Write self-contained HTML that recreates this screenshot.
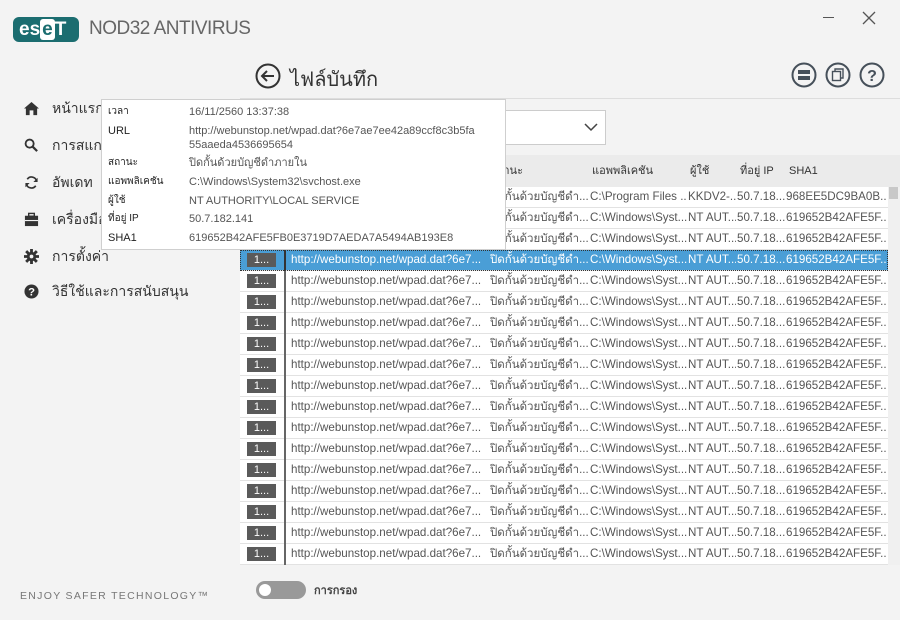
<!DOCTYPE html>
<html><head><meta charset="utf-8">
<style>
*{margin:0;padding:0;box-sizing:border-box}
body{width:900px;height:620px;overflow:hidden;background:#f3f3f3;font-family:"Liberation Sans","Noto Sans CJK SC",sans-serif;position:relative;color:#333}
.abs{position:absolute}
.nav{position:absolute;left:24px;font-size:14px;color:#333;display:flex;align-items:center;height:20px;line-height:20px}
.nav svg{width:15px;height:15px;margin-right:13px}
.row{position:absolute;left:240px;width:648px;height:21px;background:#fff;border-bottom:1px solid #e2e2e2;font-size:11.6px;color:#555;white-space:nowrap}
.row span{position:absolute;top:0;height:20px;line-height:20px;overflow:hidden}
.th{font-size:11.5px}
.btn{position:absolute;left:7px;top:3px;width:29px;height:14px;background:#5a5a5a;color:#fff;font-size:11px;text-align:center;line-height:14px}
.sep{position:absolute;left:44px;top:0;width:2px;height:21px;background:#666}
.sel{background:#4a9ed6;color:#fff;outline:1px dotted #333;outline-offset:-1px}
.tt{position:absolute;left:101px;top:99px;width:405px;height:151px;background:#fff;border:1px solid #cfcfcf;font-size:11px;color:#555}
.tt div{position:absolute;line-height:14px;height:14px}
.tt .k{left:6px;color:#222}
.tt .v{left:87px}
.tt .t{font-size:10px}
</style></head><body>
<div class="abs" style="left:13px;top:17px;width:66px;height:25px;background:#1b6d70;border-radius:6px"></div>
<div class="abs" style="left:19px;top:19px;height:21px;font:bold 19px 'Liberation Sans',sans-serif;color:#fff;line-height:21px">es<span style="background:#fff;color:#1b6d70;border-radius:3px;padding:0 2px">e</span>T</div>
<div class="abs" style="left:89px;top:18px;font-size:19px;color:#666;letter-spacing:-0.5px">NOD32 ANTIVIRUS</div>
<div class="abs" style="left:823px;top:17px;width:11px;height:1px;background:#555"></div>
<svg class="abs" style="left:862px;top:11px" width="14" height="14"><path d="M1 1L13 13M13 1L1 13" stroke="#555" stroke-width="1.3"/></svg>
<svg class="abs" style="left:791px;top:62px" width="26" height="26"><circle cx="13" cy="13" r="11.5" fill="none" stroke="#46505a" stroke-width="2"/><rect x="7" y="8" width="12" height="4" fill="#46505a"/><rect x="7" y="14" width="12" height="4" fill="#46505a"/></svg>
<svg class="abs" style="left:825px;top:62px" width="26" height="26"><circle cx="13" cy="13" r="11.5" fill="none" stroke="#46505a" stroke-width="2"/><rect x="7.5" y="9.5" width="8" height="9" fill="none" stroke="#46505a" stroke-width="1.4"/><path d="M10 9.5V7h8v9h-2.5" fill="none" stroke="#46505a" stroke-width="1.4"/></svg>
<svg class="abs" style="left:859px;top:62px" width="26" height="26"><circle cx="13" cy="13" r="11.5" fill="none" stroke="#46505a" stroke-width="2"/><text x="13" y="19" text-anchor="middle" font-family="Liberation Sans" font-weight="bold" font-size="16" fill="#46505a">?</text></svg>
<svg class="abs" style="left:255px;top:63px" width="26" height="26"><circle cx="13" cy="13" r="11.5" fill="none" stroke="#333" stroke-width="2"/><path d="M19 13H8M12 8l-5 5 5 5" fill="none" stroke="#333" stroke-width="2"/></svg>
<div class="abs" style="left:290px;top:63px;font-size:20px;color:#333">ไฟล์บันทึก</div>
<div class="abs" style="left:240px;top:98px;width:660px;height:1px;background:#ddd"></div>
<div class="nav" style="top:98px"><svg viewBox="0 0 16 16"><path d="M8 1L0 8h2v7h4v-5h4v5h4V8h2z" fill="#333"/></svg>หน้าแรก</div>
<div class="nav" style="top:135px"><svg viewBox="0 0 16 16"><circle cx="6" cy="6" r="4.3" fill="none" stroke="#333" stroke-width="2"/><path d="M9 9l5 5" stroke="#333" stroke-width="2.4"/></svg>การสแกน</div>
<div class="nav" style="top:172px"><svg viewBox="0 0 16 16"><path d="M13.5 7A5.5 5.5 0 0 0 3.5 4.5M2.5 9A5.5 5.5 0 0 0 12.5 11.5" fill="none" stroke="#333" stroke-width="1.8"/><path d="M14.5 3v4.5H10zM1.5 13V8.5H6z" fill="#333"/></svg>อัพเดท</div>
<div class="nav" style="top:209px"><svg viewBox="0 0 16 16"><rect x="1" y="4" width="14" height="11" fill="#333"/><rect x="5" y="1.5" width="6" height="3" fill="none" stroke="#333" stroke-width="1.5"/><rect x="1" y="8.5" width="14" height="1.2" fill="#f3f3f3"/></svg>เครื่องมือ</div>
<div class="nav" style="top:246px"><svg viewBox="0 0 16 16"><circle cx="8" cy="8" r="5" fill="#333"/><path d="M8 0v16M0 8h16M2.3 2.3l11.4 11.4M13.7 2.3L2.3 13.7" stroke="#333" stroke-width="3"/><circle cx="8" cy="8" r="2" fill="#f3f3f3"/></svg>การตั้งค่า</div>
<div class="nav" style="top:281px"><svg viewBox="0 0 16 16"><circle cx="8" cy="8" r="7.5" fill="#333"/><text x="8" y="12.5" text-anchor="middle" font-family="Liberation Sans" font-weight="bold" font-size="12" fill="#fff">?</text></svg>วิธีใช้และการสนับสนุน</div>
<div class="abs" style="left:20px;top:590px;font-size:10.5px;letter-spacing:1.3px;color:#777">ENJOY SAFER TECHNOLOGY™</div>
<div class="abs" style="left:440px;top:110px;width:166px;height:35px;background:#fff;border:1px solid #ccc"></div>
<svg class="abs" style="left:584px;top:122px" width="14" height="10"><path d="M1 2l6 6 6-6" fill="none" stroke="#444" stroke-width="1.5"/></svg>
<div class="abs" style="left:240px;top:155px;width:660px;height:32px;background:#ebebeb;font-size:11px;color:#333;line-height:32px">
<span class="abs" style="left:250px;top:0">สถานะ</span><span class="abs" style="left:352px;top:0">แอพพลิเคชัน</span><span class="abs" style="left:450px;top:0">ผู้ใช้</span><span class="abs" style="left:500px;top:0">ที่อยู่ IP</span><span class="abs" style="left:549px;top:0">SHA1</span></div>
<div class="abs" style="left:888px;top:187px;width:12px;height:378px;background:#f0f0f0"></div>
<div class="abs" style="left:889px;top:187px;width:9px;height:12px;background:#c8c8c8"></div>
<div id="rows"></div>
<script>
var h='';for(var i=0;i<18;i++){var t=187+i*21;var f=i==0;var s=i==3;
h+='<div class="row'+(s?' sel':'')+'" style="top:'+t+'px"><div class="btn">1...</div><div class="sep"'+(s?' style="background:#333"':'')+'></div><span style="left:51px;width:198px">http://webunstop.net/wpad.dat?6e7...</span><span class="th" style="left:250px;width:98px">ปิดกั้นด้วยบัญชีดำ...</span><span style="left:350px;width:97px">'+(f?'C:\\Program Files ...':'C:\\Windows\\Syst...')+'</span><span style="left:448px;width:48px">'+(f?'KKDV2-...':'NT AUT...')+'</span><span style="left:497px;width:48px">50.7.18...</span><span style="left:546px;width:100px">'+(f?'968EE5DC9BA0B...':'619652B42AFE5F...')+'</span></div>';}
document.getElementById('rows').innerHTML=h;
</script>
<div class="tt">
<div class="k t" style="top:5px">เวลา</div><div class="v" style="top:5px">16/11/2560 13:37:38</div>
<div class="k" style="top:24px">URL</div><div class="v" style="top:24px;height:30px">http://webunstop.net/wpad.dat?6e7ae7ee42a89ccf8c3b5fa<br>55aaeda4536695654</div>
<div class="k t" style="top:56px">สถานะ</div><div class="v" style="top:56px">ปิดกั้นด้วยบัญชีดำภายใน</div>
<div class="k t" style="top:75px">แอพพลิเคชัน</div><div class="v" style="top:75px">C:\Windows\System32\svchost.exe</div>
<div class="k t" style="top:94px">ผู้ใช้</div><div class="v" style="top:94px">NT AUTHORITY\LOCAL SERVICE</div>
<div class="k t" style="top:112px">ที่อยู่ IP</div><div class="v" style="top:112px">50.7.182.141</div>
<div class="k" style="top:131px">SHA1</div><div class="v" style="top:131px">619652B42AFE5FB0E3719D7AEDA7A5494AB193E8</div>
</div>
<div class="abs" style="left:256px;top:581px;width:50px;height:18px;border-radius:9px;background:#999"></div>
<div class="abs" style="left:259px;top:584px;width:12px;height:12px;border-radius:6px;background:#fff"></div>
<div class="abs" style="left:314px;top:581px;font-size:11px;font-weight:bold;color:#444">การกรอง</div>
</body></html>
